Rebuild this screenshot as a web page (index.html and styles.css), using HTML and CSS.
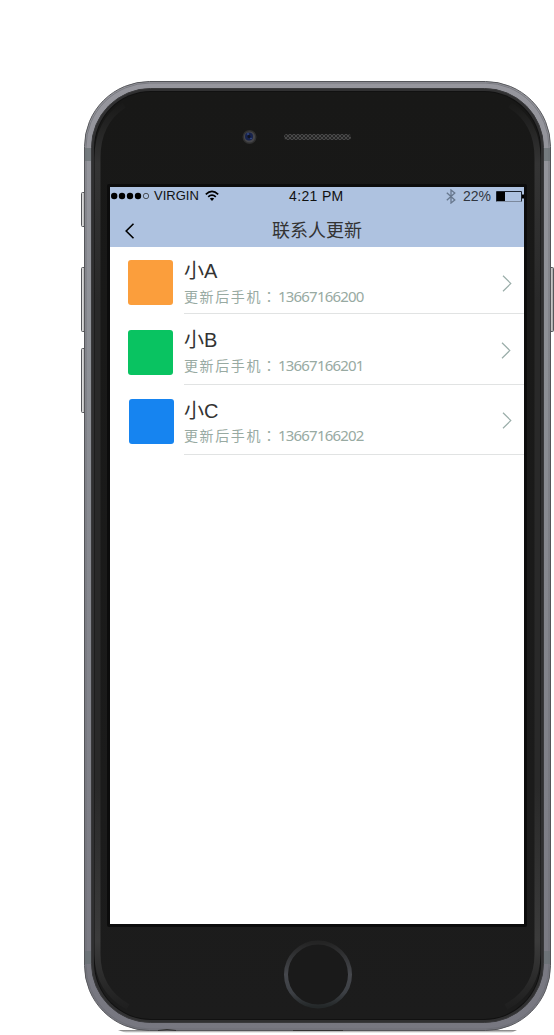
FILE: index.html
```
<!DOCTYPE html>
<html lang="zh-CN">
<head>
<meta charset="utf-8">
<title>联系人更新</title>
<link rel="stylesheet" href="styles.css">
</head>
<body>
<main class="stage">
  <svg class="device" width="554" height="1035" viewBox="0 0 554 1035" aria-hidden="true">
    <defs>
      <linearGradient id="rim" x1="0" y1="0" x2="0" y2="1"><stop offset="0" stop-color="#96969d"/><stop offset=".3" stop-color="#8d9096"/><stop offset="1" stop-color="#777780"/></linearGradient>
      <linearGradient id="face" x1="0" y1="0" x2="0" y2="1"><stop offset="0" stop-color="#181817"/><stop offset="1" stop-color="#1c1c1c"/></linearGradient>
      <linearGradient id="bevel" gradientUnits="userSpaceOnUse" x1="0" y1="100" x2="0" y2="1014"><stop offset="0" stop-color="#181817"/><stop offset=".07" stop-color="#343434"/><stop offset=".22" stop-color="#292929"/><stop offset=".75" stop-color="#292929"/><stop offset=".92" stop-color="#3b3b3b"/><stop offset="1" stop-color="#1c1c1c"/></linearGradient>
      <linearGradient id="home" x1="0" y1="0" x2="0" y2="1"><stop offset="0" stop-color="#242424"/><stop offset=".5" stop-color="#45474c"/><stop offset=".78" stop-color="#3d4045"/><stop offset="1" stop-color="#242829"/></linearGradient>
      <linearGradient id="key"><stop offset="0" stop-color="#eee"/><stop offset="1" stop-color="#999"/></linearGradient>
      <linearGradient id="shade" x1="0" y1="0" x2="0" y2="1"><stop offset="0" stop-color="#777"/><stop offset="1" stop-color="#fff"/></linearGradient>
      <pattern id="mesh" width="4" height="4" patternUnits="userSpaceOnUse"><rect width="4" height="4" fill="#252525"/><path d="M0 0l4 4M4 0L0 4" stroke="#505050" stroke-width=".8"/></pattern>
    </defs>
    <path d="M118 1030h399l-6 3H126z" fill="url(#shade)"/>
    <g fill="url(#key)" stroke="#55565a">
      <rect x="81.500" y="192.500" width="4" height="34" rx="1"/>
      <rect x="81.500" y="267.500" width="4" height="64" rx="1"/>
      <rect x="81.500" y="348.500" width="4" height="64" rx="1"/>
      <rect x="549.500" y="267.500" width="4" height="64" rx="1"/>
    </g>
    <rect x="84.500" y="81.500" width="466" height="949" rx="65" fill="url(#rim)" stroke="#55565a"/>
    <rect x="86" y="83" width="463" height="946" rx="64" fill="none" stroke="#686970" stroke-opacity=".6"/>
    <path d="M85 148h6v13h-6zM544 148h6v13h-6zM85 951h6v13h-6zM544 951h6v13h-6z" fill="#687173" fill-opacity=".7"/>
    <rect x="91.500" y="88.500" width="452" height="934" rx="59" fill="#303031" stroke="#39393b"/>
    <rect x="94" y="91" width="447" height="929" rx="57" fill="#111"/>
    <rect x="95" y="92" width="445" height="927" rx="56" fill="url(#face)"/>
    <path d="M124 105Q97.500 122 97.500 158V954Q97.500 990 128 1007M510 105Q537.500 122 537.500 158V954Q537.500 990 506 1007" fill="none" stroke="url(#bevel)" stroke-width="6"/>
    <circle cx="249.500" cy="137" r="7" fill="#303030"/><circle cx="249.500" cy="137" r="5.600" fill="#46464a"/><circle cx="249" cy="136.500" r="4" fill="#17234d"/><circle cx="249" cy="136.500" r="1.500" fill="#10131c"/><circle cx="248" cy="134" r=".8" fill="#4863a7"/><circle cx="251" cy="138.500" r=".8" fill="#3a5394"/>
    <rect x="284" y="134" width="67" height="6" rx="3" fill="url(#mesh)"/>
    <rect x="107" y="184" width="420" height="743" rx="2" fill="#0c0c0c"/>
    <circle cx="318" cy="974.500" r="32" fill="#1a1a1a" stroke="url(#home)" stroke-width="4"/>
    <path d="M293 1030.500h50M158 1030.500q9-2 18 0" stroke="#333" fill="none"/>
  </svg>
  <section class="screen">
    <header class="top">
      <div class="status">
        <svg class="signal" width="40" height="12" viewBox="0 0 40 12"><g fill="#000"><circle cx="4.200" cy="6" r="3.200"/><circle cx="12" cy="6" r="3.200"/><circle cx="20" cy="6" r="3.200"/><circle cx="28" cy="6" r="3.200"/></g><circle cx="36" cy="6" r="2.700" fill="none" stroke="#333" stroke-width=".8"/></svg>
        <span class="carrier">VIRGIN</span>
        <svg class="wifi" width="14" height="12" viewBox="0 0 14 12"><g fill="none" stroke="#000" stroke-width="1.700"><path d="M.8 4.300Q7-1.400 13.200 4.300M3.200 6.900Q7 3.400 10.800 6.900"/></g><path d="M4.800 8.500Q7 6.800 9.200 8.500L7 11z"/></svg>
        <span class="time">4:21 PM</span>
        <svg class="bluetooth" width="10" height="15" viewBox="0 0 10 15"><path d="M.8 3.700l8 7.200L5 14V1l3.800 3.100-8 7.200" fill="none" stroke="#68788e" stroke-width="1.300"/></svg>
        <span class="percent">22%</span>
        <svg class="battery" width="28" height="12" viewBox="0 0 28 12"><path d="M.5 10.500V.5h25v10" fill="none" stroke="#1b222d"/><path d="M1 10.500h24" stroke="#7c899d"/><path d="M1 1h8v9H1zM26 3.500h2v4h-2z"/></svg>
      </div>
      <div class="navbar">
        <svg class="back" width="10" height="16" viewBox="0 0 10 16"><path d="M8.500.8L1.200 8l7.300 7.200" fill="none" stroke="#000" stroke-width="1.600"/></svg>
        <h1 class="title">联系人更新</h1>
      </div>
    </header>
    <ul class="contacts">
      <li class="contact contact-a"><span class="avatar orange"></span><div class="details"><div class="copy"><h2>小A</h2><p><span class="label">更新后手机<span class="colon" lang="zh-TW">：</span></span><span class="phone">13667166200</span></p></div><svg class="chevron" width="10" height="17" viewBox="0 0 10 17"><path d="M1 .8l7.800 7.700L1 16.200"/></svg></div></li>
      <li class="contact contact-b"><span class="avatar green"></span><div class="details"><div class="copy"><h2>小B</h2><p><span class="label">更新后手机<span class="colon" lang="zh-TW">：</span></span><span class="phone">13667166201</span></p></div><svg class="chevron" width="10" height="17" viewBox="0 0 10 17"><path d="M1 .8l7.800 7.700L1 16.200"/></svg></div></li>
      <li class="contact contact-c"><span class="avatar blue"></span><div class="details"><div class="copy"><h2>小C</h2><p><span class="label">更新后手机<span class="colon" lang="zh-TW">：</span></span><span class="phone">13667166202</span></p></div><svg class="chevron" width="10" height="17" viewBox="0 0 10 17"><path d="M1 .8l7.800 7.700L1 16.200"/></svg></div></li>
    </ul>
  </section>
</main>
</body>
</html>
```
FILE: styles.css
```
* { box-sizing: border-box; }
body { margin: 0; background: #fff; font-family: "Liberation Sans", "Noto Sans CJK SC", sans-serif; }
h1, h2, p, ul { margin: 0; padding: 0; font-weight: 400; }
svg { display: block; flex-shrink: 0; }
.stage { display: grid; width: 554px; height: 1035px; overflow: hidden; }
.device, .screen { grid-area: 1 / 1; }
.screen { width: 414px; height: 737px; margin: 187px 0 0 110px; background: #fff; overflow: hidden; }
.top { height: 60px; background: #aec2e0; color: #333; }
.status { display: flex; align-items: center; height: 18px; white-space: nowrap; font-size: 13px; line-height: 18px; }
.status span { flex-shrink: 0; color: #111; }
.signal { margin-right: 4px; }
.carrier { width: 51px; }
.wifi { margin-right: 70px; }
.time { width: 157px; font-size: 14px; letter-spacing: .35px; }
.bluetooth { margin-right: 7px; }
.status .percent { width: 33px; font-size: 14px; color: #303641; }
.battery { margin-top: 1px; }
.navbar { display: grid; grid-template-columns: 40px 1fr 40px; align-items: center; height: 42px; padding-top: 10px; }
.back { margin: -1px 0 0 15px; }
.title { font-size: 18px; line-height: 26px; text-align: center; }
.contacts { list-style: none; }
.contact { display: flex; padding-left: 18px; }
.contact-a { height: 67px; }
.contact-b { height: 71px; }
.contact-c { height: 70px; padding-left: 19px; }
.avatar { width: 45px; height: 45px; margin: 13px 11px 0 0; border-radius: 3px; flex-shrink: 0; }
.contact-b .avatar { margin-top: 16px; }
.contact-c .avatar { margin: 14px 10px 0 0; }
.orange { background: #fb9e3c; }
.green { background: #09c361; }
.blue { background: #1684f0; }
.details { display: flex; flex: 1; justify-content: space-between; padding: 11px 12px 0 0; border-bottom: 1px solid #e1e3e3; }
.contact-b .details { padding-top: 13px; padding-right: 13px; }
.contact-c .details { padding-top: 13px; }
.copy h2 { font-size: 20px; line-height: 26px; color: #333; }
.copy p { display: flex; align-items: center; height: 24px; line-height: 24px; color: #98aaa2; }
.contact-c .copy p { height: 22px; }
.label { width: 94px; font-size: 14px; letter-spacing: 1.6px; white-space: nowrap; }
.colon { font-family: "Noto Sans CJK TC", sans-serif; }
.phone { font-family: "Noto Sans", sans-serif; font-size: 15px; letter-spacing: -.8px; }
.chevron { margin-top: 17px; fill: none; stroke: #9aada9; stroke-width: 1.2; }
.contact-b .chevron { margin-top: 15px; }
.contact-c .chevron { margin-top: 14px; }
```
